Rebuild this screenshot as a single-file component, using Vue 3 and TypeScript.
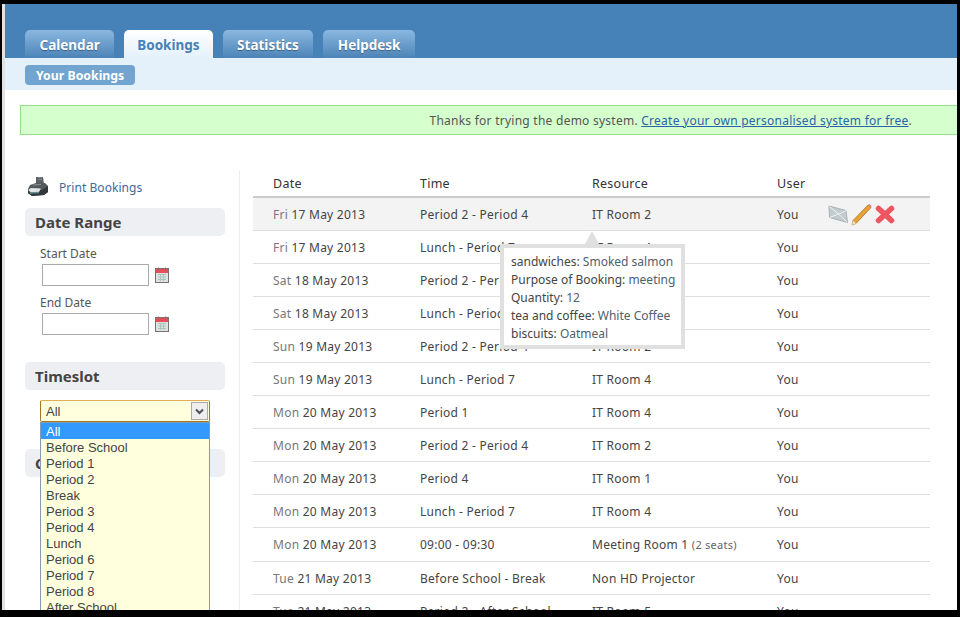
<script setup lang="ts">
interface Booking {
  day: string
  date: string
  time: string
  resource: string
  seats?: string
}

const tabs = ['Calendar', 'Bookings', 'Statistics', 'Helpdesk']

const bookings: Booking[] = [
  { day: 'Fri', date: '17 May 2013', time: 'Period 2 - Period 4', resource: 'IT Room 2' },
  { day: 'Fri', date: '17 May 2013', time: 'Lunch - Period 7', resource: 'IT Room 4' },
  { day: 'Sat', date: '18 May 2013', time: 'Period 2 - Period 4', resource: 'IT Room 2' },
  { day: 'Sat', date: '18 May 2013', time: 'Lunch - Period 7', resource: 'IT Room 4' },
  { day: 'Sun', date: '19 May 2013', time: 'Period 2 - Period 4', resource: 'IT Room 2' },
  { day: 'Sun', date: '19 May 2013', time: 'Lunch - Period 7', resource: 'IT Room 4' },
  { day: 'Mon', date: '20 May 2013', time: 'Period 1', resource: 'IT Room 4' },
  { day: 'Mon', date: '20 May 2013', time: 'Period 2 - Period 4', resource: 'IT Room 2' },
  { day: 'Mon', date: '20 May 2013', time: 'Period 4', resource: 'IT Room 1' },
  { day: 'Mon', date: '20 May 2013', time: 'Lunch - Period 7', resource: 'IT Room 4' },
  { day: 'Mon', date: '20 May 2013', time: '09:00 - 09:30', resource: 'Meeting Room 1', seats: '(2 seats)' },
  { day: 'Tue', date: '21 May 2013', time: 'Before School - Break', resource: 'Non HD Projector' },
  { day: 'Tue', date: '21 May 2013', time: 'Period 2 - After School', resource: 'IT Room 5' }
]

const slots = [
  'All', 'Before School', 'Period 1', 'Period 2', 'Break', 'Period 3',
  'Period 4', 'Lunch', 'Period 6', 'Period 7', 'Period 8', 'After School'
]

const details = [
  ['sandwiches:', 'Smoked salmon'],
  ['Purpose of Booking:', 'meeting'],
  ['Quantity:', '12'],
  ['tea and coffee:', 'White Coffee'],
  ['biscuits:', 'Oatmeal']
]

const dateFields = ['Start Date', 'End Date']
</script>

<template>
  <div class="frame">
    <div class="page">
      <header class="header">
        <a v-for="tab in tabs" :key="tab" class="tab" :class="{ 'tab--active': tab === 'Bookings' }">{{ tab }}</a>
      </header>
      <div class="subnav"><a class="pill">Your Bookings</a></div>
      <div class="notice">
        Thanks for trying the demo system.&nbsp;<a class="notice__link">Create your own personalised system for free</a>.
      </div>

      <div class="main">
        <aside class="sidebar">
          <div class="print">
            <svg width="22" height="21" viewBox="0 0 22 21">
              <path d="M9 1h7l1 7H9z" fill="#5c6064" />
              <path d="M11 1.5h4M11 3.5h4" stroke="#85898c" />
              <path d="M3 9l6-2 9 0 3 3v6l-4 3-12 1-4-3v-4z" fill="#56595c" />
              <path d="M1 13l14 1 6-4v6l-4 3-12 1-4-3z" fill="#33363a" />
              <path d="M1 14l3-2 10 .5-2 3.5-8 .5z" fill="#dfe6e8" />
              <path d="M3 17l9-.5" stroke="#5d8f94" stroke-width="1.4" />
              <path d="M6 9l8-.5" stroke="#8e9295" />
            </svg>
            <a class="print__link">Print Bookings</a>
          </div>

          <h3 class="heading heading--first">Date Range</h3>
          <div v-for="field in dateFields" :key="field" class="field">
            <label class="field__label">{{ field }}</label>
            <div class="field__row">
              <span class="field__input"></span>
              <svg width="14" height="16" viewBox="0 0 14 16">
                <rect x="0.5" y="1.5" width="13" height="14" fill="#dde3e0" stroke="#7b6f6f" />
                <rect x="1" y="2" width="12" height="4" fill="#ea4d57" />
                <path d="M3 7.5h8M3 10h8M3 12.5h8M5.5 7v7M8.5 7v7" stroke="#a9c4bd" />
                <path d="M3.5 0.5v3M10.5 0.5v3" stroke="#8b6a6a" />
              </svg>
            </div>
          </div>

          <h3 class="heading heading--slot">Timeslot</h3>
          <div class="picker">
            <div class="picker__box">
              <span>All</span>
              <span class="picker__arrow">
                <svg width="9" height="7" viewBox="0 0 9 7">
                  <path d="M1 1.5l3.5 3.5L8 1.5" fill="none" stroke="#4d5058" stroke-width="2" />
                </svg>
              </span>
            </div>
            <ul class="picker__list">
              <li v-for="slot in slots" :key="slot" :class="{ selected: slot === 'All' }">{{ slot }}</li>
            </ul>
          </div>
          <h3 class="heading heading--next">Category</h3>
        </aside>

        <section class="content">
          <table class="bookings">
            <colgroup>
              <col class="col-date" />
              <col class="col-time" />
              <col class="col-resource" />
              <col class="col-user" />
              <col />
            </colgroup>
            <thead>
              <tr>
                <th>Date</th>
                <th>Time</th>
                <th>Resource</th>
                <th>User</th>
                <th></th>
              </tr>
            </thead>
            <tbody>
              <tr v-for="(b, i) in bookings" :key="i" :class="{ hovered: i === 0, tall: b.seats }">
                <td><span class="day">{{ b.day }}</span> {{ b.date }}</td>
                <td>{{ b.time }}</td>
                <td>{{ b.resource }} <small v-if="b.seats">{{ b.seats }}</small></td>
                <td>You</td>
                <td class="actions">
                  <div v-if="i === 0" class="actions__icons">
                    <svg width="20" height="18" viewBox="0 0 20 18">
                      <path d="M1 1l17 4.5 1.5 12L1.5 12.5z" fill="#c3cbcf" stroke="#a9b1b5" />
                      <path d="M1.5 1.5l9 7.5 8-3.5M1.5 12.5l9-3.5 8.5 8" fill="none" stroke="#eef1f2" />
                    </svg>
                    <svg width="21" height="23" viewBox="0 0 21 23">
                      <path d="M1 22l1-4.5L17 2l3 2.6L5 20.5z" fill="#e8a137" stroke="#a96d1c" stroke-width=".7" />
                      <path d="M1 22l1-4.5 3 3z" fill="#f3dcc0" />
                      <path d="M17 2l1.2-1.2 2.4 2.2L20 4.6z" fill="#d9868b" />
                    </svg>
                    <svg width="20" height="19" viewBox="0 0 20 19">
                      <path d="M3.5 3.5l13 12M16.5 3.5l-13 12" fill="none" stroke="#ee5560" stroke-width="5.5" stroke-linecap="round" />
                    </svg>
                  </div>
                </td>
              </tr>
            </tbody>
          </table>

          <div class="tip">
            <div v-for="row in details" :key="row[0]" class="tip__row">
              {{ row[0] }} <span class="tip__value">{{ row[1] }}</span>
            </div>
          </div>
        </section>
      </div>
    </div>
  </div>
</template>

<style>
html,
body {
  margin: 0;
  background: #000;
}
</style>

<style scoped>
.frame {
  box-sizing: border-box;
  width: 960px;
  height: 617px;
  padding: 4px 3px 7px 2px;
  background: #000;
  font-family: 'Noto Sans', sans-serif;
  font-size: 12px;
  color: #444;
}

.page {
  position: relative;
  height: 100%;
  overflow: hidden;
  background: #fff;
  border-left: 3px solid #e2e2e2;
}

/* ===== TOP NAV ===== */
.header {
  display: flex;
  align-items: flex-end;
  gap: 10px;
  height: 54px;
  box-sizing: border-box;
  padding-left: 20px;
  background: #4682b8;
}

.tab {
  height: 28px;
  line-height: 30px;
  padding: 0 14.5px;
  border-radius: 5px 5px 0 0;
  background: linear-gradient(#8ab7e0, #4c84b7);
  color: #fff;
  font-size: 13.5px;
  font-weight: 700;
  text-shadow: 0 1px 1px rgba(0, 0, 0, 0.35);
}

.tab--active {
  padding: 0 13px;
  background: linear-gradient(#fff, #e4f1fb);
  color: #4682b8;
  text-shadow: none;
}

.subnav {
  height: 32px;
  box-sizing: border-box;
  padding: 7px 20px 0;
  background: #e4f1fb;
}

.pill {
  display: inline-block;
  height: 20px;
  line-height: 21px;
  padding: 0 11px;
  border-radius: 4px;
  background: #71a4cf;
  color: #fff;
  font-size: 12.3px;
  font-weight: 700;
}

.notice {
  box-sizing: border-box;
  height: 30px;
  line-height: 29px;
  margin: 15px 0 0 15px;
  padding-right: 45px;
  border: 1px solid #99dd90;
  border-right: 0;
  background: #d5ffcc;
  text-align: right;
  color: #555;
  letter-spacing: 0.25px;
}

.notice__link {
  color: #2a63a8;
  text-decoration: underline;
}

/* ===== LAYOUT ===== */
.main {
  display: flex;
  margin-top: 35px;
}

.sidebar {
  position: relative;
  box-sizing: border-box;
  width: 235px;
  height: 440px;
  padding-left: 20px;
  border-right: 1px solid #eee;
}

.print {
  display: flex;
  align-items: center;
  gap: 10px;
  height: 21px;
  margin: 6px 0 0 2px;
}

.print__link {
  margin-top: 2px;
  color: #3f6a9c;
  letter-spacing: 0.05px;
}

.heading {
  box-sizing: border-box;
  width: 200px;
  height: 28px;
  line-height: 28px;
  margin: 0;
  padding-left: 10px;
  border-radius: 5px;
  background: #eeeff3;
  color: #444;
  font-size: 15px;
  font-weight: 700;
}

.heading--first {
  margin: 11px 0 8px;
}

.heading--slot {
  margin-top: 27px;
}

.heading--next {
  margin-top: 59px;
}

.field {
  padding-left: 15px;
}

.field__label {
  display: block;
  height: 20px;
  line-height: 19px;
  color: #555;
}

.field__row {
  display: flex;
  align-items: center;
  gap: 6px;
  height: 22px;
  margin: 0 0 7px 2px;
}

.field__input {
  box-sizing: border-box;
  width: 107px;
  height: 22px;
  border: 1px solid #aaa;
  background: #fff;
}

/* Open native-looking dropdown */
.picker {
  position: absolute;
  top: 230px;
  left: 35px;
  z-index: 2;
  width: 170px;
  font-family: 'Liberation Sans', Arial, sans-serif;
  font-size: 13px;
  color: #444;
}

.picker__box {
  display: flex;
  align-items: center;
  justify-content: space-between;
  box-sizing: border-box;
  height: 22px;
  padding: 0 1px 0 5px;
  border: 1px solid #a6761f;
  border-top-color: #dcae55;
  border-radius: 2px;
  background: #ffffdd;
}

.picker__arrow {
  display: flex;
  align-items: center;
  justify-content: center;
  box-sizing: border-box;
  width: 17px;
  height: 18px;
  border: 1px solid #aaa;
  background: #eee;
}

.picker__list {
  box-sizing: border-box;
  margin: 0;
  padding: 0;
  list-style: none;
  border: 1px solid #7f9db9;
  background: #ffffdd;
}

.picker__list li {
  height: 16px;
  line-height: 18px;
  padding-left: 5px;
}

.picker__list .selected {
  background: #3399ff;
  color: #fff;
}

/* ===== BOOKINGS TABLE ===== */
.content {
  position: relative;
  margin-left: 13px;
}

.bookings {
  width: 677px;
  table-layout: fixed;
  border-collapse: separate;
  border-spacing: 0;
  letter-spacing: 0.25px;
}

.col-date {
  width: 147px;
}

.col-time {
  width: 172px;
}

.col-resource {
  width: 185px;
}

.col-user {
  width: 71px;
}

.bookings th {
  box-sizing: border-box;
  height: 28px;
  padding: 0 0 0 20px;
  border-bottom: 2px solid #ccc;
  text-align: left;
  font-size: 12.5px;
  font-weight: 400;
  color: #333;
}

.bookings td {
  box-sizing: border-box;
  height: 33px;
  padding: 0 0 0 20px;
  border-bottom: 1px solid #ddd;
  white-space: nowrap;
}

.bookings .tall td {
  height: 34px;
}

.hovered td {
  background: #f3f3f3;
}

.day {
  color: #777;
}

small {
  font-size: 11px;
  color: #666;
}

.bookings .actions {
  padding: 0;
}

.actions__icons {
  display: flex;
  align-items: center;
  gap: 3px;
}

.tip {
  position: absolute;
  top: 74px;
  left: 247px;
  z-index: 1;
  box-sizing: border-box;
  width: 185px;
  height: 105px;
  padding: 5px 0 0 7px;
  border: 4px solid #e0e0e0;
  background: #fff;
  color: #444;
}

.tip::before {
  content: '';
  position: absolute;
  top: -17px;
  left: 81px;
  border: 7px solid transparent;
  border-top: 0;
  border-bottom: 13px solid #e0e0e0;
}

.tip__row {
  height: 18px;
  line-height: 18px;
  white-space: nowrap;
}

.tip__value {
  color: #50606e;
}
</style>
